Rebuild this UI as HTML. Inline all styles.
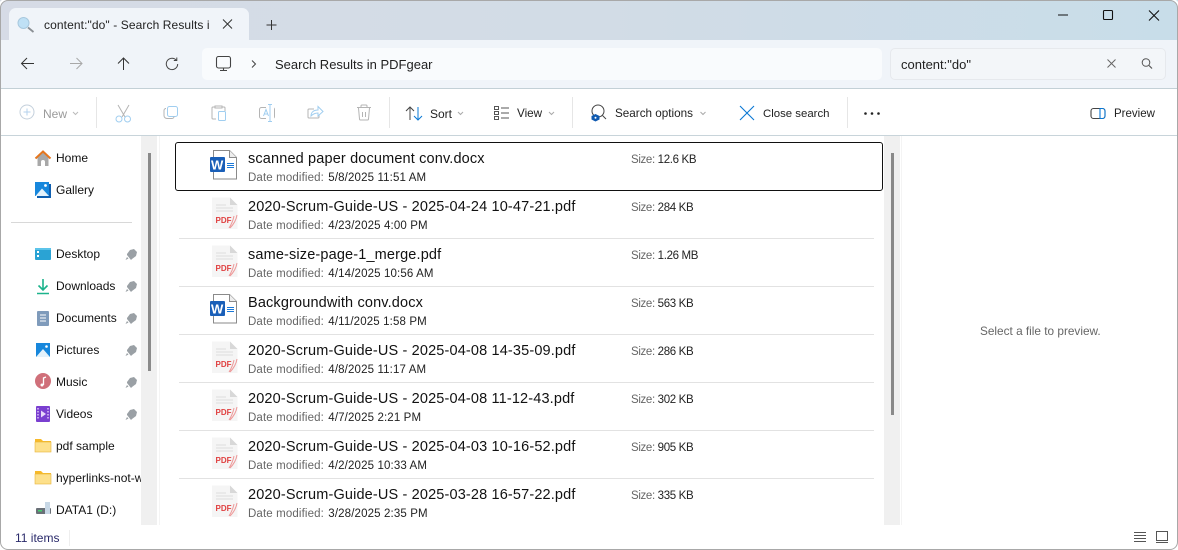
<!DOCTYPE html>
<html><head><meta charset="utf-8"><style>
html,body{margin:0;padding:0;background:#fff}
body{width:1178px;height:550px;overflow:hidden;position:relative;font-family:"Liberation Sans",sans-serif;color:#1a1a1a}
.a{position:absolute;white-space:nowrap}
svg{position:absolute;overflow:visible}
.t{position:absolute;white-space:nowrap;font-size:12px;line-height:16px}
.nm{position:absolute;left:248px;white-space:nowrap;font-size:14.5px;letter-spacing:.15px;line-height:18px;color:#111;margin-top:1px}
.dm{position:absolute;left:248px;white-space:nowrap;font-size:11.5px;letter-spacing:.13px;line-height:14px;color:#222}
.dm i{font-style:normal;color:#666;margin-right:1px}
.sz i{font-style:normal;color:#666;margin-right:0}
.sz{position:absolute;left:631px;white-space:nowrap;font-size:11.5px;letter-spacing:-.35px;line-height:14px;color:#222}
.sep{position:absolute;left:179px;width:695px;height:1px;background:#e2e2e2}
.nav{position:absolute;left:56px;white-space:nowrap;font-size:12px;line-height:16px;color:#111}
.dis{color:#9a9a9a}
</style></head><body>
<!-- chrome -->
<div class="a" style="left:0;top:0;width:1178px;height:40px;background:linear-gradient(90deg,#d6dbe6 0%,#d2dce6 50%,#c8dde9 100%)"></div>
<div class="a" style="left:0;top:40px;width:1178px;height:48px;background:#f0f4f9"></div>
<div class="a" style="left:0;top:88px;width:1178px;height:1px;background:#c3d0d6"></div>
<div class="a" style="left:0;top:135px;width:1178px;height:1px;background:#c8d4da"></div>
<div class="a" style="left:9px;top:8px;width:240px;height:33px;background:#f0f4f9;border-radius:7px 7px 0 0"></div>
<svg style="left:0;top:0" width="1178" height="40">
<circle cx="23.500" cy="23" r="5.500" fill="#bfe0f5" stroke="#a8c8de" stroke-width="1"/><path d="M28 27.500L33.500 32" stroke="#8a8f94" stroke-width="1.800"/>
<path d="M223 19.500l9 9M232 19.500l-9 9" stroke="#333" stroke-width="1" fill="none"/>
<path d="M271.500 20v10M266.500 25h10" stroke="#333" stroke-width="1" fill="none"/>
<path d="M1058 15h10" stroke="#111" stroke-width="1"/>
<rect x="1103.500" y="10.500" width="9" height="9" rx="1" fill="none" stroke="#111" stroke-width="1.100"/>
<path d="M1149 10.500l10 10M1159 10.500l-10 10" stroke="#111" stroke-width="1.100"/>
</svg>
<div class="a" style="left:44px;top:17px;width:165px;overflow:hidden;font-size:12px;letter-spacing:.1px;line-height:16px;color:#222">content:"do" - Search Results in PDFgear</div>
<!-- address row -->
<svg style="left:0;top:40px" width="200" height="48">
<path d="M34 23.500H22M27 18l-5.500 5.500L27 29" fill="none" stroke="#333" stroke-width="1"/>
<path d="M70 23.500h12M76.500 18l5.500 5.500L76.500 29" fill="none" stroke="#a8a8a8" stroke-width="1"/>
<path d="M123.500 30V18M118 23.500l5.500-5.500 5.500 5.500" fill="none" stroke="#333" stroke-width="1"/>
<path d="M176.500 20.400A5.700 5.700 0 1 0 177.700 24M176.800 17.500v3h-3" fill="none" stroke="#444" stroke-width="1"/>
</svg>
<div class="a" style="left:202px;top:48px;width:680px;height:32px;background:#f9fbfd;border-radius:5px"></div>
<svg style="left:202px;top:48px" width="80" height="32">
<rect x="14.500" y="8.500" width="14" height="11.500" rx="2" fill="none" stroke="#444" stroke-width="1.100"/><path d="M18 22.500h7M21.500 20v2.500" stroke="#444" stroke-width="1.100"/>
<path d="M50 12.500l3.500 3.500-3.500 3.500" fill="none" stroke="#444" stroke-width="1"/>
</svg>
<div class="a" style="left:275px;top:56px;font-size:13px;line-height:18px;color:#222">Search Results in PDFgear</div>
<div class="a" style="left:890px;top:48px;width:274px;height:30px;background:#f3f6f9;border:1px solid #e6e9ed;border-radius:5px"></div>
<div class="a" style="left:901px;top:56px;font-size:13px;line-height:18px;color:#222">content:"do"</div>
<svg style="left:1100px;top:50px" width="60" height="28">
<path d="M7.500 9.500l8 8M15.500 9.500l-8 8" stroke="#666" stroke-width="1" fill="none"/>
<circle cx="46" cy="12.500" r="3.800" fill="none" stroke="#555" stroke-width="1"/><path d="M49 15.500l3 3" stroke="#555" stroke-width="1.200"/>
</svg>
<!-- command bar -->
<svg style="left:0;top:89px" width="1178" height="47">
<circle cx="27" cy="23" r="7" fill="none" stroke="#c4d0dc" stroke-width="1"/><path d="M27 19.500v7M23.500 23h7" stroke="#b4d2ec" stroke-width="1"/>
<path d="M73 23l2.500 2.500L78 23" fill="none" stroke="#bbb"/>
<path d="M96.500 8v31M389.500 8v31M572.500 8v31M847.500 8v31" stroke="#e6e6e6"/>
<path d="M118 16l7 12M129 16l-7 12" stroke="#b4b4b4" fill="none"/><circle cx="119" cy="30" r="3" fill="none" stroke="#a0cef0"/><circle cx="127.500" cy="30" r="3" fill="none" stroke="#a0cef0"/>
<rect x="167.500" y="17.500" width="10" height="10" rx="2" fill="none" stroke="#a0cef0"/><path d="M166 19.500a2 2 0 0 0-2 2v5a3 3 0 0 0 3 3h5a2 2 0 0 0 2-2" fill="none" stroke="#b4b4b4"/>
<path d="M215 18h-2a1 1 0 0 0-1 1v10a1 1 0 0 0 1 1h3M222 18h2a1 1 0 0 1 1 1v3M215 17h7v2h-7z" fill="none" stroke="#b4b4b4"/><rect x="218.500" y="22.500" width="7" height="9" rx="1" fill="none" stroke="#a0cef0"/>
<rect x="259.500" y="18.500" width="15" height="11" rx="2" fill="none" stroke="#b4b4b4"/><rect x="266" y="15" width="8" height="17" fill="#fff"/><path d="M270 16v16M268 15.500h4M268 32.500h4" stroke="#a0cef0" fill="none"/><path d="M263.500 27l2.500-6.500 2.500 6.500M264.500 25h3" stroke="#a0cef0" fill="none"/>
<path d="M314 20h-5a1 1 0 0 0-1 1v7a1 1 0 0 0 1 1h9a1 1 0 0 0 1-1v-2" fill="none" stroke="#b4b4b4"/><path d="M311 27c0-4 3-6 7-6v-3.500l5 5-5 4.500v-3c-3 0-5 1-7 3z" fill="none" stroke="#a0cef0"/>
<path d="M357 18.500h14M361 18.500v-1.500a1 1 0 0 1 1-1h4a1 1 0 0 1 1 1v1.500M358.500 19l1 11a1 1 0 0 0 1 1h7a1 1 0 0 0 1-1l1-11M362.500 23v5M365.500 23v5" fill="none" stroke="#b4b4b4"/>
<path d="M458 23l2.500 2.500L463 23M549 23l2.500 2.500L554 23M700.500 23l2.500 2.500L705.500 23" fill="none" stroke="#aaa"/>
<path d="M410 31V18M406 22l4-4 4 4" fill="none" stroke="#444"/><path d="M418 18v13M414 27l4 4 4-4" fill="none" stroke="#0a78d4"/>
<g fill="none" stroke="#555"><rect x="494.500" y="17.500" width="4" height="3"/><rect x="494.500" y="22.500" width="4" height="3"/><rect x="494.500" y="27.500" width="4" height="3"/><path d="M501 19h8M501 24h8M501 29h8"/></g>
<circle cx="598" cy="22" r="6" fill="none" stroke="#444"/><path d="M602.500 26.500l3.500 3.500" stroke="#444"/><path d="M595.500 25l4 2v3.500l-4 2-4-2V27z" fill="#0f5ab0"/><circle cx="595.500" cy="28.700" r="1" fill="#fff"/>
<path d="M740 17l14 14M754 17l-14 14" stroke="#0a78d4" stroke-width="1.100"/>
<circle cx="865.500" cy="24.500" r="1.300" fill="#222"/><circle cx="872" cy="24.500" r="1.300" fill="#222"/><circle cx="878.500" cy="24.500" r="1.300" fill="#222"/>
<rect x="1091" y="19.500" width="14" height="10" rx="2.500" fill="none" stroke="#444" stroke-width="1.100"/><path d="M1100 19.500h2.500a2.500 2.500 0 0 1 2.500 2.500v5a2.500 2.500 0 0 1-2.500 2.500H1100z" fill="none" stroke="#0a78d4" stroke-width="1.100"/>
</svg>
<div class="t dis" style="left:43px;top:106px">New</div>
<div class="t" style="left:430px;top:106px;color:#222">Sort</div>
<div class="t" style="left:517px;top:106px;color:#222;font-size:11.7px">View</div>
<div class="t" style="left:615px;top:106px;color:#222;font-size:11.7px">Search options</div>
<div class="t" style="left:763px;top:106px;color:#222;font-size:11.4px">Close search</div>
<div class="t" style="left:1114px;top:106px;color:#222;font-size:11.5px">Preview</div>
<!-- sidebar -->
<div class="a" style="left:141px;top:136px;width:16px;height:389px;background:#f0f0f0"></div>
<div class="a" style="left:148px;top:153px;width:2.500px;height:218px;background:#8a8a8a"></div>
<div class="a" style="left:159px;top:136px;width:1px;height:389px;background:#f4f4f4"></div>
<div class="a" style="left:11px;top:222px;width:121px;height:1px;background:#d8d8d8"></div>
<div class="nav" style="top:150px">Home</div>
<div class="nav" style="top:182px">Gallery</div>
<div class="nav" style="top:246px">Desktop</div>
<div class="nav" style="top:278px">Downloads</div>
<div class="nav" style="top:310px">Documents</div>
<div class="nav" style="top:342px">Pictures</div>
<div class="nav" style="top:374px">Music</div>
<div class="nav" style="top:406px">Videos</div>
<div class="nav" style="top:438px">pdf sample</div>
<div class="nav" style="top:470px;width:85px;overflow:hidden">hyperlinks-not-working</div>
<div class="nav" style="top:502px">DATA1 (D:)</div>
<svg style="left:0;top:136px" width="141" height="389">
<path d="M37.500 21.500L43 16.500l5.500 5V30h-3.500v-4a2 2 0 0 0-4 0v4h-3.500z" fill="#a8a8a8"/><path d="M35.500 22.500L43 15.500l7.500 7" fill="none" stroke="#e5761e" stroke-width="2"/>
<path d="M49 48h2v14H37v-2h12z" fill="#0f5fb0"/><rect x="35" y="46" width="14" height="14" fill="#1787dc"/><path d="M35.500 60l6.500-7.500L49 60z" fill="#e4f2fb"/><circle cx="45.500" cy="49.500" r="1.400" fill="#fff"/>
<rect x="35" y="112" width="16" height="12" rx="1" fill="#2aa3d4"/><rect x="35" y="112" width="16" height="2" fill="#5cc4ea"/><rect x="37" y="115" width="2" height="2" fill="#fff"/><rect x="37" y="119" width="2" height="2" fill="#fff"/>
<path d="M43 143v11M38.500 149.500l4.500 4.500 4.500-4.500" fill="none" stroke="#1cb38c" stroke-width="1.600"/><path d="M37 157.500h12" stroke="#1cb38c" stroke-width="1.500"/>
<rect x="37" y="175" width="12" height="15" rx="1" fill="#7f9bbb"/><path d="M40 179h6M40 182h6M40 185h6" stroke="#fff"/>
<rect x="36" y="207" width="14" height="14" fill="#1787dc"/><path d="M36 221l7-8 7 8z" fill="#e4f2fb"/><circle cx="46.500" cy="210.500" r="1.300" fill="#fff"/>
<circle cx="43" cy="245" r="8" fill="#d0707a"/><path d="M43.500 249v-7l2.500-1" fill="none" stroke="#fff" stroke-width="1.300"/><circle cx="42" cy="249" r="1.500" fill="#fff"/>
<rect x="36" y="270" width="14" height="16" rx="1" fill="#7a3fd0"/><path d="M41 274.500l5 3.500-5 3.500z" fill="#e8d8fa"/><path d="M38 272v12M48 272v12" stroke="#d9c4f5" stroke-dasharray="1.500 1.500" stroke-width="1.500"/>
<g fill="#9aa0a5" transform="translate(0,-3)"><path d="M127 121l3-4 4-1 3 3-1 4-4 3-1 1-4-5zM127 124l-1.500 3 3-1.500z"/><path d="M127 153l3-4 4-1 3 3-1 4-4 3-1 1-4-5zM127 156l-1.500 3 3-1.500z"/><path d="M127 185l3-4 4-1 3 3-1 4-4 3-1 1-4-5zM127 188l-1.500 3 3-1.500z"/><path d="M127 217l3-4 4-1 3 3-1 4-4 3-1 1-4-5zM127 220l-1.500 3 3-1.500z"/><path d="M127 249l3-4 4-1 3 3-1 4-4 3-1 1-4-5zM127 252l-1.500 3 3-1.500z"/><path d="M127 281l3-4 4-1 3 3-1 4-4 3-1 1-4-5zM127 284l-1.500 3 3-1.500z"/></g>
<path d="M35 303h6l2 2h8v11H35z" fill="#f7b92a"/><rect x="35" y="306" width="16" height="10" fill="#fde08b" stroke="#e8b53a" stroke-width=".6"/>
<path d="M35 335h6l2 2h8v11H35z" fill="#f7b92a"/><rect x="35" y="338" width="16" height="10" fill="#fde08b" stroke="#e8b53a" stroke-width=".6"/>
<rect x="36" y="372" width="15" height="6" rx="1" fill="#6a7077"/><rect x="38" y="374" width="4" height="1.500" fill="#44d070"/><path d="M45 366h5v12h-5z" fill="#c8d8e6"/>
</svg>
<!-- main scrollbar -->
<div class="a" style="left:884px;top:136px;width:16px;height:389px;background:#f0f0f0"></div>
<div class="a" style="left:891px;top:153px;width:2.500px;height:262px;background:#8a8a8a"></div>
<div class="a" style="left:901px;top:136px;width:1px;height:389px;background:#f4f4f4"></div>
<!-- rows -->
<div class="a" style="left:175px;top:142px;width:706px;height:47px;border:1px solid #111;border-radius:3px"></div>
<div class="sep" style="top:238px"></div><div class="sep" style="top:286px"></div><div class="sep" style="top:334px"></div><div class="sep" style="top:382px"></div><div class="sep" style="top:430px"></div><div class="sep" style="top:478px"></div>
<svg width="0" height="0" style="position:absolute"><defs>
<g id="w"><path d="M3.500 .5h16l7 7v21.500h-23z" fill="#fff" stroke="#8a8a8a"/><path d="M19.500 .5v7h7" fill="#eee" stroke="#8a8a8a"/><path d="M17 13.500h7M17 15.500h7M17 17.500h7" stroke="#1a78d8"/><rect x="0" y="7" width="15" height="15" rx="1" fill="#1a5fb8"/></g>
<g id="p"><path d="M0 .5h18l7.500 7.500v24H0z" fill="#f5f5f5"/><path d="M18 .5V8h7.500z" fill="#d8d8d8"/><path d="M4 8h10M4 11h17M4 14h17" stroke="#ddd"/><path d="M25 18c-1 6-4 10-7 13M22 19c-1 5-3 9-5 12" stroke="#e99" fill="none"/></g>
</defs></svg>
<svg style="left:210px;top:150px" width="30" height="32"><use href="#w"/><text x="1" y="19.500" font-family="Liberation Sans" font-size="13" font-weight="bold" fill="#fff">W</text></svg>
<svg style="left:212px;top:197px" width="30" height="32"><use href="#p"/><text x="3.500" y="26" font-family="Liberation Sans" font-size="8" font-weight="bold" fill="#e04040">PDF</text></svg>
<svg style="left:212px;top:245px" width="30" height="32"><use href="#p"/><text x="3.500" y="26" font-family="Liberation Sans" font-size="8" font-weight="bold" fill="#e04040">PDF</text></svg>
<svg style="left:210px;top:294px" width="30" height="32"><use href="#w"/><text x="1" y="19.500" font-family="Liberation Sans" font-size="13" font-weight="bold" fill="#fff">W</text></svg>
<svg style="left:212px;top:341px" width="30" height="32"><use href="#p"/><text x="3.500" y="26" font-family="Liberation Sans" font-size="8" font-weight="bold" fill="#e04040">PDF</text></svg>
<svg style="left:212px;top:389px" width="30" height="32"><use href="#p"/><text x="3.500" y="26" font-family="Liberation Sans" font-size="8" font-weight="bold" fill="#e04040">PDF</text></svg>
<svg style="left:212px;top:437px" width="30" height="32"><use href="#p"/><text x="3.500" y="26" font-family="Liberation Sans" font-size="8" font-weight="bold" fill="#e04040">PDF</text></svg>
<svg style="left:212px;top:485px" width="30" height="32"><use href="#p"/><text x="3.500" y="26" font-family="Liberation Sans" font-size="8" font-weight="bold" fill="#e04040">PDF</text></svg>

<div class="nm" style="top:149px">scanned paper document conv.docx</div><div class="dm" style="top:171px"><i>Date modified:</i> 5/8/2025 11:51 AM</div><div class="sz" style="top:153px"><i>Size:</i> 12.6 KB</div>
<div class="nm" style="top:197px">2020-Scrum-Guide-US - 2025-04-24 10-47-21.pdf</div><div class="dm" style="top:219px"><i>Date modified:</i> 4/23/2025 4:00 PM</div><div class="sz" style="top:201px"><i>Size:</i> 284 KB</div>
<div class="nm" style="top:245px">same-size-page-1_merge.pdf</div><div class="dm" style="top:267px"><i>Date modified:</i> 4/14/2025 10:56 AM</div><div class="sz" style="top:249px"><i>Size:</i> 1.26 MB</div>
<div class="nm" style="top:293px">Backgroundwith conv.docx</div><div class="dm" style="top:315px"><i>Date modified:</i> 4/11/2025 1:58 PM</div><div class="sz" style="top:297px"><i>Size:</i> 563 KB</div>
<div class="nm" style="top:341px">2020-Scrum-Guide-US - 2025-04-08 14-35-09.pdf</div><div class="dm" style="top:363px"><i>Date modified:</i> 4/8/2025 11:17 AM</div><div class="sz" style="top:345px"><i>Size:</i> 286 KB</div>
<div class="nm" style="top:389px">2020-Scrum-Guide-US - 2025-04-08 11-12-43.pdf</div><div class="dm" style="top:411px"><i>Date modified:</i> 4/7/2025 2:21 PM</div><div class="sz" style="top:393px"><i>Size:</i> 302 KB</div>
<div class="nm" style="top:437px">2020-Scrum-Guide-US - 2025-04-03 10-16-52.pdf</div><div class="dm" style="top:459px"><i>Date modified:</i> 4/2/2025 10:33 AM</div><div class="sz" style="top:441px"><i>Size:</i> 905 KB</div>
<div class="nm" style="top:485px">2020-Scrum-Guide-US - 2025-03-28 16-57-22.pdf</div><div class="dm" style="top:507px"><i>Date modified:</i> 3/28/2025 2:35 PM</div><div class="sz" style="top:489px"><i>Size:</i> 335 KB</div>

<div class="a" style="left:980px;top:323px;font-size:11.8px;line-height:16px;color:#666">Select a file to preview.</div>
<!-- status bar -->
<div class="a" style="left:15px;top:530px;font-size:12px;line-height:16px;color:#2a2a6a">11 items</div>
<div class="a" style="left:69px;top:530px;width:1px;height:16px;background:#eee"></div>
<svg style="left:1130px;top:528px" width="40" height="18">
<path d="M4 4.500h12M4 7.500h12M4 10.500h12M4 13.500h12" stroke="#555"/>
<rect x="26.500" y="3.500" width="11" height="9" fill="none" stroke="#555"/><path d="M26 14.500h12" stroke="#555"/>
</svg>
<!-- window border -->
<div class="a" style="left:0;top:0;width:1176px;height:548px;border:1px solid #a8a8a8;border-radius:8px;box-shadow:0 0 0 2px #fff"></div>
</body></html>
